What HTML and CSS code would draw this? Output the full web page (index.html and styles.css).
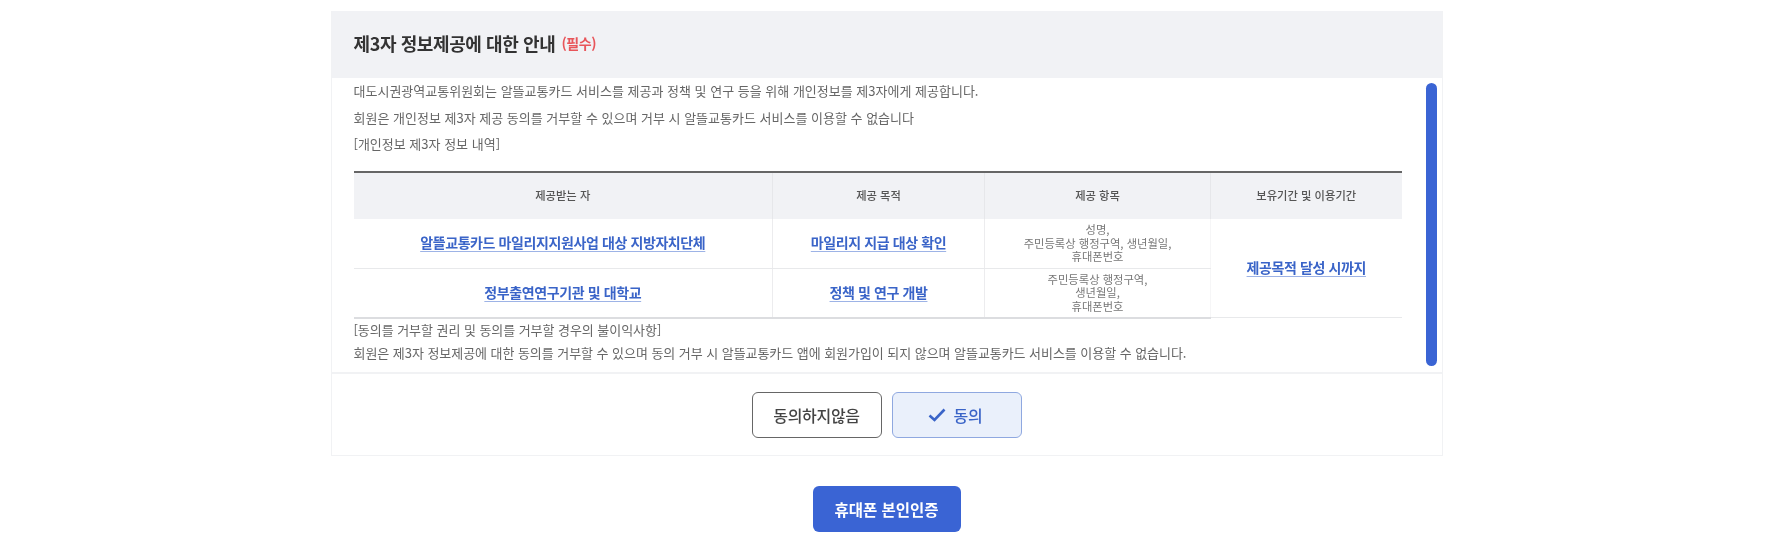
FILE: index.html
```html
<!DOCTYPE html>
<html lang="ko">
<head>
    <meta charset="UTF-8">
    <meta name="viewport" content="width=device-width, initial-scale=1.0">
    <title>제3자 정보제공에 대한 안내</title>

    <link rel="stylesheet" href="styles.css">
</head>
<body>
    <div class="page">
        <section class="agree-box">
            <h2 class="agree-title">제3자 정보제공에 대한 안내 <span class="required">(필수)</span></h2>

            <div class="agree-scroll">
                <div class="agree-content">
                    <p class="desc">대도시권광역교통위원회는 알뜰교통카드 서비스를 제공과 정책 및 연구 등을 위해 개인정보를 제3자에게 제공합니다.</p>
                    <p class="desc">회원은 개인정보 제3자 제공 동의를 거부할 수 있으며 거부 시 알뜰교통카드 서비스를 이용할 수 없습니다</p>
                    <p class="desc">[개인정보 제3자 정보 내역]</p>

                    <table class="info-table">
                        <colgroup>
                            <col class="col-who">
                            <col class="col-why">
                            <col class="col-what">
                            <col class="col-when">
                        </colgroup>
                        <thead>
                            <tr>
                                <th>제공받는 자</th>
                                <th>제공 목적</th>
                                <th>제공 항목</th>
                                <th>보유기간 및 이용기간</th>
                            </tr>
                        </thead>
                        <tbody>
                            <tr class="first-row">
                                <td><span class="link-text">알뜰교통카드 마일리지지원사업 대상 지방자치단체</span></td>
                                <td><span class="link-text">마일리지 지급 대상 확인</span></td>
                                <td class="items">성명,<br>주민등록상 행정구역, 생년월일,<br>휴대폰번호</td>
                                <td class="period" rowspan="2"><span class="link-text">제공목적 달성 시까지</span></td>
                            </tr>
                            <tr class="last-row">
                                <td><span class="link-text">정부출연연구기관 및 대학교</span></td>
                                <td><span class="link-text">정책 및 연구 개발</span></td>
                                <td class="items">주민등록상 행정구역,<br>생년월일,<br>휴대폰번호</td>
                            </tr>
                        </tbody>
                    </table>

                    <p class="notice notice-head">[동의를 거부할 권리 및 동의를 거부할 경우의 불이익사항]</p>
                    <p class="notice">회원은 제3자 정보제공에 대한 동의를 거부할 수 있으며 동의 거부 시 알뜰교통카드 앱에 회원가입이 되지 않으며 알뜰교통카드 서비스를 이용할 수 없습니다.</p>
                </div>
                <div class="scroll-thumb"></div>
            </div>

            <div class="agree-buttons">
                <button class="btn btn-no" type="button">동의하지않음</button>
                <button class="btn btn-yes" type="button">
                    <svg class="check" width="18" height="14" viewBox="0 0 18 14" fill="none">
                        <path d="M1.5 7.5 L6.5 12 L16.5 1.5" stroke="#3a64c8" stroke-width="2.6"/>
                    </svg>
                    동의
                </button>
            </div>
        </section>

        <button class="btn-phone" type="button">휴대폰 본인인증</button>
    </div>
</body>
</html>
```

FILE: styles.css
```css
* {
    box-sizing: border-box;
}

body {
    margin: 0;
    background-color: #fff;
    font-family: "Noto Sans CJK KR", "Noto Sans", sans-serif;
    color: #666;
}

.page {
    display: flex;
    flex-direction: column;
    align-items: center;
    padding-top: 11px;
    filter: blur(0.7px);
}

.agree-box {
    width: 1112px;
    height: 445px;
    border: 1px solid #f1f2f4;
    border-top: 0;
    display: flex;
    flex-direction: column;
}

.agree-title {
    margin: 0;
    height: 67px;
    padding: 0 22px 3px;
    display: flex;
    align-items: center;
    gap: 6px;
    background: #f1f2f5;
    color: #333;
    font-size: 18px;
    font-weight: 700;
    letter-spacing: -0.4px;
}

.required {
    color: #e8555a;
    font-size: 14px;
}

.agree-scroll {
    height: 296px;
    display: flex;
    border-bottom: 2px solid #f1f2f4;
}

.agree-content {
    width: 1077px;
    padding-left: 22px;
}

.desc {
    margin: 0;
    height: 26.5px;
    line-height: 26.5px;
    font-size: 13px;
}

.info-table {
    width: 1048px;
    margin-top: 13px;
    border-collapse: collapse;
    table-layout: fixed;
    border-top: 2px solid #666;
}

.col-who { width: 419px; }
.col-why { width: 212px; }
.col-what { width: 226px; }
.col-when { width: 191px; }

.info-table th {
    height: 47px;
    padding-bottom: 2px;
    background: #f1f2f5;
    border-left: 1px solid #e6e7ea;
    font-size: 11.3px;
    font-weight: 500;
    color: #555;
}

.info-table th:first-child,
.info-table td:first-child {
    border-left: 0;
}

.info-table td {
    height: 49px;
    padding: 0 0 4px;
    text-align: center;
    border-left: 1px solid #ececee;
    border-bottom: 1px solid #e8e9eb;
}

.first-row td {
    height: 50px;
}

.last-row td {
    border-bottom: 2px solid #dcdde0;
}

.info-table td.period {
    border-left-color: #f6f6f7;
    border-bottom: 1px solid #e8e9eb;
}

.link-text {
    color: #3a64c8;
    font-size: 14px;
    font-weight: 700;
    letter-spacing: -0.4px;
    text-decoration: underline;
    text-decoration-color: #9db3e6;
    text-underline-offset: 3px;
}

.info-table td.items {
    padding: 0;
    font-size: 11.3px;
    line-height: 13.5px;
    color: #777;
}

.notice {
    margin: 0;
    line-height: 23px;
    font-size: 13px;
    letter-spacing: -0.05px;
}

.notice-head {
    margin-top: -1px;
}

.scroll-thumb {
    width: 11px;
    height: 283px;
    margin: 5px 0 0 17px;
    background: #3a64d4;
    border-radius: 6px;
}

.agree-buttons {
    flex: 1;
    display: flex;
    justify-content: center;
    align-items: center;
    gap: 10px;
}

.btn {
    width: 130px;
    height: 46px;
    border-radius: 6px;
    font-family: inherit;
    font-size: 16px;
    font-weight: 500;
    letter-spacing: -0.3px;
}

.btn-no {
    background: #fff;
    border: 1px solid #666;
    color: #444;
}

.btn-yes {
    display: flex;
    justify-content: center;
    align-items: center;
    gap: 8px;
    padding-right: 9px;
    background: #eaf0fb;
    border: 1px solid #8fa8e0;
    color: #3a64c8;
}

.btn-phone {
    width: 148px;
    height: 46px;
    margin-top: 30px;
    background: #3a64d4;
    border: 0;
    border-radius: 6px;
    color: #fff;
    font-family: inherit;
    font-size: 15.5px;
    font-weight: 700;
}
```
